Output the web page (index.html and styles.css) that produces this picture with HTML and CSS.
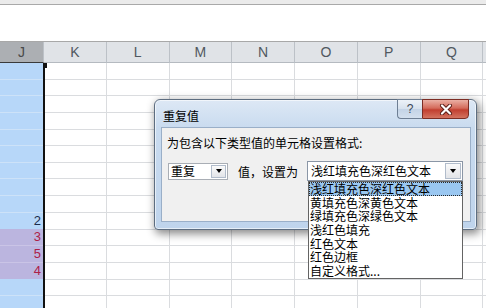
FILE: index.html
```html
<!DOCTYPE html>
<html>
    <head>
        <meta charset="utf-8">
        <link rel="stylesheet" href="styles.css">
    </head>
    <body>
        <div class="sheet">
            <div class="formula-edge"></div>
            <div class="formula-space"></div>

            <div class="grid">
                <div class="row header">
                    <div class="cell sel">J</div><div class="cell">K</div><div class="cell">L</div><div class="cell">M</div><div class="cell">N</div><div class="cell">O</div><div class="cell">P</div><div class="cell">Q</div><div class="cell"></div>
                </div>
                <div class="row"><div class="cell sel"></div><div class="cell"></div><div class="cell"></div><div class="cell"></div><div class="cell"></div><div class="cell"></div><div class="cell"></div><div class="cell"></div><div class="cell"></div></div>
                <div class="row"><div class="cell sel"></div><div class="cell"></div><div class="cell"></div><div class="cell"></div><div class="cell"></div><div class="cell"></div><div class="cell"></div><div class="cell"></div><div class="cell"></div></div>
                <div class="row"><div class="cell sel"></div><div class="cell"></div><div class="cell"></div><div class="cell"></div><div class="cell"></div><div class="cell"></div><div class="cell"></div><div class="cell"></div><div class="cell"></div></div>
                <div class="row"><div class="cell sel"></div><div class="cell"></div><div class="cell"></div><div class="cell"></div><div class="cell"></div><div class="cell"></div><div class="cell"></div><div class="cell"></div><div class="cell"></div></div>
                <div class="row"><div class="cell sel"></div><div class="cell"></div><div class="cell"></div><div class="cell"></div><div class="cell"></div><div class="cell"></div><div class="cell"></div><div class="cell"></div><div class="cell"></div></div>
                <div class="row"><div class="cell sel"></div><div class="cell"></div><div class="cell"></div><div class="cell"></div><div class="cell"></div><div class="cell"></div><div class="cell"></div><div class="cell"></div><div class="cell"></div></div>
                <div class="row"><div class="cell sel"></div><div class="cell"></div><div class="cell"></div><div class="cell"></div><div class="cell"></div><div class="cell"></div><div class="cell"></div><div class="cell"></div><div class="cell"></div></div>
                <div class="row"><div class="cell sel"></div><div class="cell"></div><div class="cell"></div><div class="cell"></div><div class="cell"></div><div class="cell"></div><div class="cell"></div><div class="cell"></div><div class="cell"></div></div>
                <div class="row"><div class="cell sel"></div><div class="cell"></div><div class="cell"></div><div class="cell"></div><div class="cell"></div><div class="cell"></div><div class="cell"></div><div class="cell"></div><div class="cell"></div></div>
                <div class="row"><div class="cell sel num">2</div><div class="cell"></div><div class="cell"></div><div class="cell"></div><div class="cell"></div><div class="cell"></div><div class="cell"></div><div class="cell"></div><div class="cell"></div></div>
                <div class="row"><div class="cell sel dup num">3</div><div class="cell"></div><div class="cell"></div><div class="cell"></div><div class="cell"></div><div class="cell"></div><div class="cell"></div><div class="cell"></div><div class="cell"></div></div>
                <div class="row"><div class="cell sel dup num">5</div><div class="cell"></div><div class="cell"></div><div class="cell"></div><div class="cell"></div><div class="cell"></div><div class="cell"></div><div class="cell"></div><div class="cell"></div></div>
                <div class="row"><div class="cell sel dup num">4</div><div class="cell"></div><div class="cell"></div><div class="cell"></div><div class="cell"></div><div class="cell"></div><div class="cell"></div><div class="cell"></div><div class="cell"></div></div>
                <div class="row"><div class="cell sel"></div><div class="cell"></div><div class="cell"></div><div class="cell"></div><div class="cell"></div><div class="cell"></div><div class="cell"></div><div class="cell"></div><div class="cell"></div></div>
                <div class="row"><div class="cell sel"></div><div class="cell"></div><div class="cell"></div><div class="cell"></div><div class="cell"></div><div class="cell"></div><div class="cell"></div><div class="cell"></div><div class="cell"></div></div>
            </div>

            <!-- selection outline on the right side of column J -->
            <div class="selection"><span class="handle"></span></div>

            <div class="dialog">
                <div class="title">重复值</div>
                <div class="title-buttons">
                    <div class="btn-help">?</div>
                    <div class="btn-close">
                        <svg width="14" height="11" viewBox="0 0 14 11">
                            <path d="M3 1.5 L11 9.5 M11 1.5 L3 9.5" stroke="#5a1d16" stroke-width="4" stroke-linecap="round"/>
                            <path d="M3 1.5 L11 9.5 M11 1.5 L3 9.5" stroke="#ffffff" stroke-width="2.2" stroke-linecap="round"/>
                        </svg>
                    </div>
                </div>
                <div class="panel">
                    <p class="prompt">为包含以下类型值的单元格设置格式:</p>
                    <div class="controls">
                        <div class="combo combo-small">
                            <span class="combo-text">重复</span>
                            <span class="combo-arrow"></span>
                        </div>
                        <span class="label">值，设置为</span>
                        <div class="combo combo-wide">
                            <span class="combo-text">浅红填充色深红色文本</span>
                            <span class="combo-arrow"></span>
                            <ul class="list">
                                <li class="active">浅红填充色深红色文本</li>
                                <li>黄填充色深黄色文本</li>
                                <li>绿填充色深绿色文本</li>
                                <li>浅红色填充</li>
                                <li>红色文本</li>
                                <li>红色边框</li>
                                <li>自定义格式...</li>
                            </ul>
                        </div>
                    </div>
                </div>
            </div>
        </div>
    </body>
</html>
```

FILE: styles.css
```css
body {
    margin: 0;
    background: #ffffff;
    overflow: hidden;
}

.sheet {
    position: relative;
    width: 486px;
    height: 308px;
    overflow: hidden;
    font-family: "Liberation Sans", Arial, sans-serif;
}

.formula-edge {
    height: 4px;
    background: #ebebeb;
    border-bottom: 1px solid #a9a9a9;
}

.formula-space {
    height: 36px;
    background: #ffffff;
}

.grid {
    border-top: 1px solid #a8a8a8;
}

.row {
    display: grid;
    grid-template-columns: 44px repeat(8, 62.75px);
    height: 16.65px;
}

.cell {
    box-sizing: border-box;
    border-right: 1px solid #dadcdf;
    border-bottom: 1px solid #dadcdf;
    font-size: 13px;
    line-height: 16px;
}

.header {
    height: 21px;
}

.header .cell {
    background: #e0e3e7;
    border-right: 1px solid #bcc1c7;
    border-bottom: 1px solid #b5bac0;
    color: #505860;
    text-align: center;
    font-size: 14px;
    line-height: 20px;
}

.header .cell.sel {
    background: #acafb3;
    border-bottom: 1px solid #3a3a3a;
    color: #4a4a4a;
}

.cell.sel {
    background: #b7d7f9;
    border-bottom-color: #cde2f8;
}

.cell.dup {
    background: #bbb5df;
    border-bottom-color: #cac4e6;
    color: #ad2148;
}

.num {
    text-align: right;
    padding-right: 2px;
    color: #1c2d4c;
}

.cell.dup.num {
    color: #ad2148;
}

.selection {
    position: absolute;
    left: 43px;
    top: 63px;
    bottom: 0;
    width: 2px;
    background: #111111;
}

.handle {
    position: absolute;
    left: 0;
    top: 0;
    width: 4px;
    height: 5px;
    background: #111111;
}

/* dialog */

.dialog {
    position: absolute;
    left: 154px;
    top: 99px;
    width: 323px;
    height: 131px;
    box-sizing: border-box;
    padding: 0 5px 7px 6px;
    display: flex;
    flex-direction: column;
    border: 1px solid #5d6d80;
    border-radius: 6px 6px 4px 4px;
    background: linear-gradient(#dde8f5, #c9dbef 28px, #bfd4ec);
    box-shadow: 2px 3px 8px 1px rgba(0, 0, 0, 0.45), inset 0 0 0 1px rgba(255, 255, 255, 0.6);
    font-family: "Noto Sans CJK SC", "Liberation Sans", sans-serif;
    font-size: 12px;
    color: #000000;
}

.title {
    height: 27px;
    box-sizing: border-box;
    padding: 3px 0 0 2px;
    display: flex;
    align-items: center;
}

.title-buttons {
    position: absolute;
    top: -1px;
    right: 7px;
    display: flex;
}

.btn-help {
    width: 25px;
    height: 20px;
    box-sizing: border-box;
    border: 1px solid #6e7f94;
    border-right: none;
    border-radius: 0 0 0 4px;
    background: linear-gradient(#edf2f8, #d6e1ed 50%, #c3d3e6 51%, #d3e0ee);
    color: #3a4656;
    font-family: "Liberation Sans", sans-serif;
    font-size: 12px;
    line-height: 18px;
    text-align: center;
}

.btn-close {
    width: 47px;
    height: 20px;
    box-sizing: border-box;
    border: 1px solid #7c2d24;
    border-radius: 0 0 4px 0;
    background: linear-gradient(#eab0a4, #d46b5b 45%, #c13f30 55%, #d37360);
    display: flex;
    align-items: center;
    justify-content: center;
}

.panel {
    flex: 1;
    border: 1px solid #9aafc8;
    background: #f0f0f0;
    padding: 8px 5px 0 5px;
}

.prompt {
    margin: 0;
    line-height: 14px;
}

.controls {
    display: flex;
    align-items: center;
    margin-top: 11px;
    height: 20px;
}

.combo {
    position: relative;
    display: flex;
    align-items: center;
    box-sizing: border-box;
    background: #ffffff;
}

.combo-small {
    width: 60px;
    height: 17px;
    margin-left: 1px;
    border: 1px solid #a9aeb5;
}

.combo-wide {
    width: 156px;
    height: 20px;
    margin-left: 9px;
    border: 1px solid #8a96a6;
}

.combo-text {
    flex: 1;
    padding-left: 2px;
    line-height: 14px;
}

.combo-wide .combo-text {
    padding-left: 3px;
}

.combo-arrow {
    position: relative;
    width: 15px;
    height: 13px;
    margin-right: 1px;
    box-sizing: border-box;
    border: 1px solid #b1bccb;
    background: linear-gradient(#fafafa, #e2e4e8);
}

.combo-wide .combo-arrow {
    width: 16px;
    height: 16px;
}

.combo-arrow::after {
    content: "";
    position: absolute;
    left: 50%;
    top: 50%;
    margin: -2px 0 0 -3px;
    border-left: 3px solid transparent;
    border-right: 3px solid transparent;
    border-top: 4px solid #000000;
}

.label {
    margin-left: 10px;
}

.list {
    position: absolute;
    left: 0;
    top: 19px;
    width: 155px;
    margin: 0;
    padding: 0;
    list-style: none;
    box-sizing: border-box;
    border: 1px solid #646464;
    background: #ffffff;
}

.list li {
    height: 13.7px;
    line-height: 13.7px;
    padding-left: 1px;
    white-space: nowrap;
}

.list li.active {
    background: #9ac7f1;
    outline: 1px dotted #2a2a2a;
    outline-offset: -1px;
}
```
